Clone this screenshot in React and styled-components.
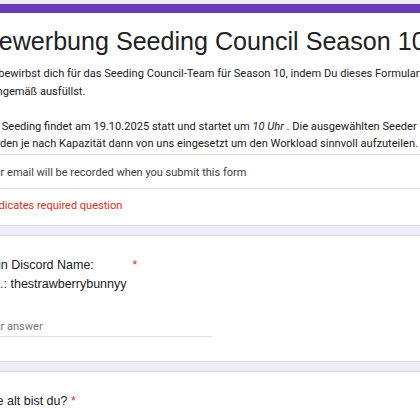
import React from "react";
import styled, { createGlobalStyle } from "styled-components";

const GlobalStyle = createGlobalStyle`
  body {
    margin: 0;
    background: #f0ebf8;
    overflow: hidden;
  }
`;

const questions = [
  { id: 1, lines: ["Dein Discord Name:", "z.B.: thestrawberrybunnyy"], input: true },
  { id: 2, lines: ["Wie alt bist du?"], inline: true },
];

function App() {
  return (
    <>
      <GlobalStyle />
      <Page>
        <Card $accent>
          <Header>
            <Title>Bewerbung Seeding Council Season 10</Title>
            <Description>
              Du bewirbst dich für das Seeding Council-Team für Season 10, indem Du dieses Formular
              <br />
              sinngemäß ausfüllst.
              <br />
              <br />
              Der Seeding findet am 19.10.2025 statt und startet um <em>10 Uhr</em> . Die ausgewählten Seeder
              <br />
              werden je nach Kapazität dann von uns eingesetzt um den Workload sinnvoll aufzuteilen.
            </Description>
          </Header>
          <EmailRow>Your email will be recorded when you submit this form</EmailRow>
          <RequiredRow>* Indicates required question</RequiredRow>
        </Card>

        {questions.map((q) => (
          <Card key={q.id}>
            <QuestionBody>
              {q.inline ? (
                <QuestionTitle>
                  {q.lines[0]} <Star>*</Star>
                </QuestionTitle>
              ) : (
                <TitleRow>
                  <QuestionTitle>
                    {q.lines.map((l) => (
                      <div key={l}>{l}</div>
                    ))}
                  </QuestionTitle>
                  <Star>*</Star>
                </TitleRow>
              )}
              {q.input && <AnswerField>Your answer</AnswerField>}
            </QuestionBody>
          </Card>
        ))}
      </Page>
    </>
  );
}

const Page = styled.div`
  display: flex;
  flex-direction: column;
  gap: 9px;
  padding-top: 4px;
  margin-left: -43px;
  width: 760px;
`;

const Card = styled.div`
  background: #fff;
  border: 1px solid #dadce0;
  border-top: ${(p) => (p.$accent ? "9px solid #673ab7" : "1px solid #dadce0")};
  border-radius: 8px;
`;

const Header = styled.div`
  padding: 12px 24px 1px;
  border-bottom: 1px solid #dadce0;
`;

const Title = styled.div`
  font: 25.1px/32px "Liberation Sans", Arial, sans-serif;
  color: #202124;
  white-space: nowrap;
`;

const Description = styled.div`
  margin-top: 8px;
  font: 11.1px/17.5px Roboto, "Liberation Sans", sans-serif;
  color: #202124;
  white-space: nowrap;
`;

const EmailRow = styled.div`
  padding: 9px 24px 7px;
  font: 11px/17px Roboto, "Liberation Sans", sans-serif;
  color: #3c4043;
  border-bottom: 1px solid #dadce0;
`;

const RequiredRow = styled.div`
  padding: 8px 24px 11px;
  font: 11px/17px Roboto, "Liberation Sans", sans-serif;
  color: #d93025;
`;

const QuestionBody = styled.div`
  padding: 20px 24px 24px;
`;

const TitleRow = styled.div`
  display: flex;
  align-items: flex-start;
  gap: 6px;
`;

const QuestionTitle = styled.div`
  font: 12.5px/19px "Liberation Sans", Arial, sans-serif;
  color: #202124;
`;

const Star = styled.span`
  color: #d93025;
  font: 12.5px/19px "Liberation Sans", Arial, sans-serif;
`;

const AnswerField = styled.div`
  margin-top: 24px;
  width: 230px;
  padding-bottom: 1px;
  border-bottom: 1px solid #dadce0;
  font: 11px/17px Roboto, "Liberation Sans", sans-serif;
  color: #70757a;
`;

export default App;
